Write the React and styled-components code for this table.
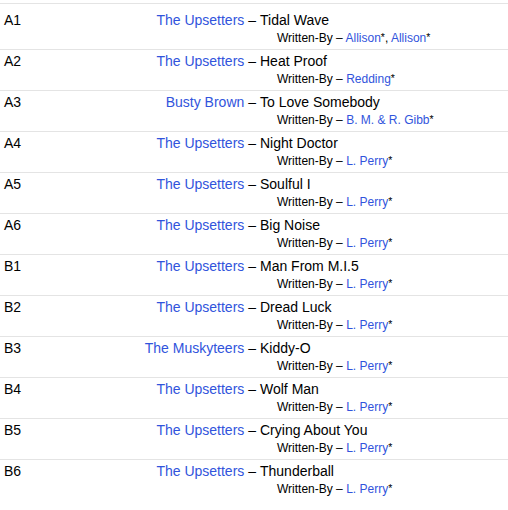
import React from "react";
import styled, { createGlobalStyle } from "styled-components";

const Global = createGlobalStyle`
  html, body { margin: 0; padding: 0; background: #fff; }
  body { font-family: "Liberation Sans", Arial, Helvetica, sans-serif; color: #000; }
`;

const Table = styled.div`
  padding-top: 3px;
  width: 508px;
`;

const Row = styled.div`
  display: grid;
  grid-template-columns: 40px 220px 1fr;
  border-top: 1px solid #e4e4e4;
  padding: ${(p) => (p.$first ? "7px" : "2px")} 0 2px 0;
`;

const Pos = styled.div`
  padding-left: 4px;
  font-size: 14px;
  line-height: 18px;
`;

const Artist = styled.div`
  text-align: right;
  padding-right: 4px;
  font-size: 14px;
  line-height: 18px;
  white-space: nowrap;
`;

const Link = styled.a`
  color: #3154dc;
  text-decoration: none;
`;

const TrackCell = styled.div`
  display: flex;
  flex-direction: column;
`;

const Title = styled.span`
  font-size: 14px;
  line-height: 18px;
`;

const Credits = styled.div`
  padding: 1px 0 0 17px;
  font-size: 12px;
  line-height: 17px;
  white-space: nowrap;
`;

const Star = styled.span`
  font-size: 10.5px;
  vertical-align: 1px;
  line-height: 0;
`;

const tracks = [
  ["A1", "The Upsetters", "Tidal Wave", ["Allison", "Allison"]],
  ["A2", "The Upsetters", "Heat Proof", ["Redding"]],
  ["A3", "Busty Brown", "To Love Somebody", ["B. M. & R. Gibb"]],
  ["A4", "The Upsetters", "Night Doctor", ["L. Perry"]],
  ["A5", "The Upsetters", "Soulful I", ["L. Perry"]],
  ["A6", "The Upsetters", "Big Noise", ["L. Perry"]],
  ["B1", "The Upsetters", "Man From M.I.5", ["L. Perry"]],
  ["B2", "The Upsetters", "Dread Luck", ["L. Perry"]],
  ["B3", "The Muskyteers", "Kiddy-O", ["L. Perry"]],
  ["B4", "The Upsetters", "Wolf Man", ["L. Perry"]],
  ["B5", "The Upsetters", "Crying About You", ["L. Perry"]],
  ["B6", "The Upsetters", "Thunderball", ["L. Perry"]],
];

export default function App() {
  return (
    <>
      <Global />
      <Table>
        {tracks.map(([pos, artist, title, writers], i) => (
          <Row key={pos} $first={i === 0}>
            <Pos>{pos}</Pos>
            <Artist>
              <Link href="#">{artist}</Link> –
            </Artist>
            <TrackCell>
              <Title>{title}</Title>
              <Credits>
                Written-By –{" "}
                {writers.map((w, j) => (
                  <React.Fragment key={j}>
                    {j > 0 && ", "}
                    <Link href="#">{w}</Link>
                    <Star>*</Star>
                  </React.Fragment>
                ))}
              </Credits>
            </TrackCell>
          </Row>
        ))}
      </Table>
    </>
  );
}
